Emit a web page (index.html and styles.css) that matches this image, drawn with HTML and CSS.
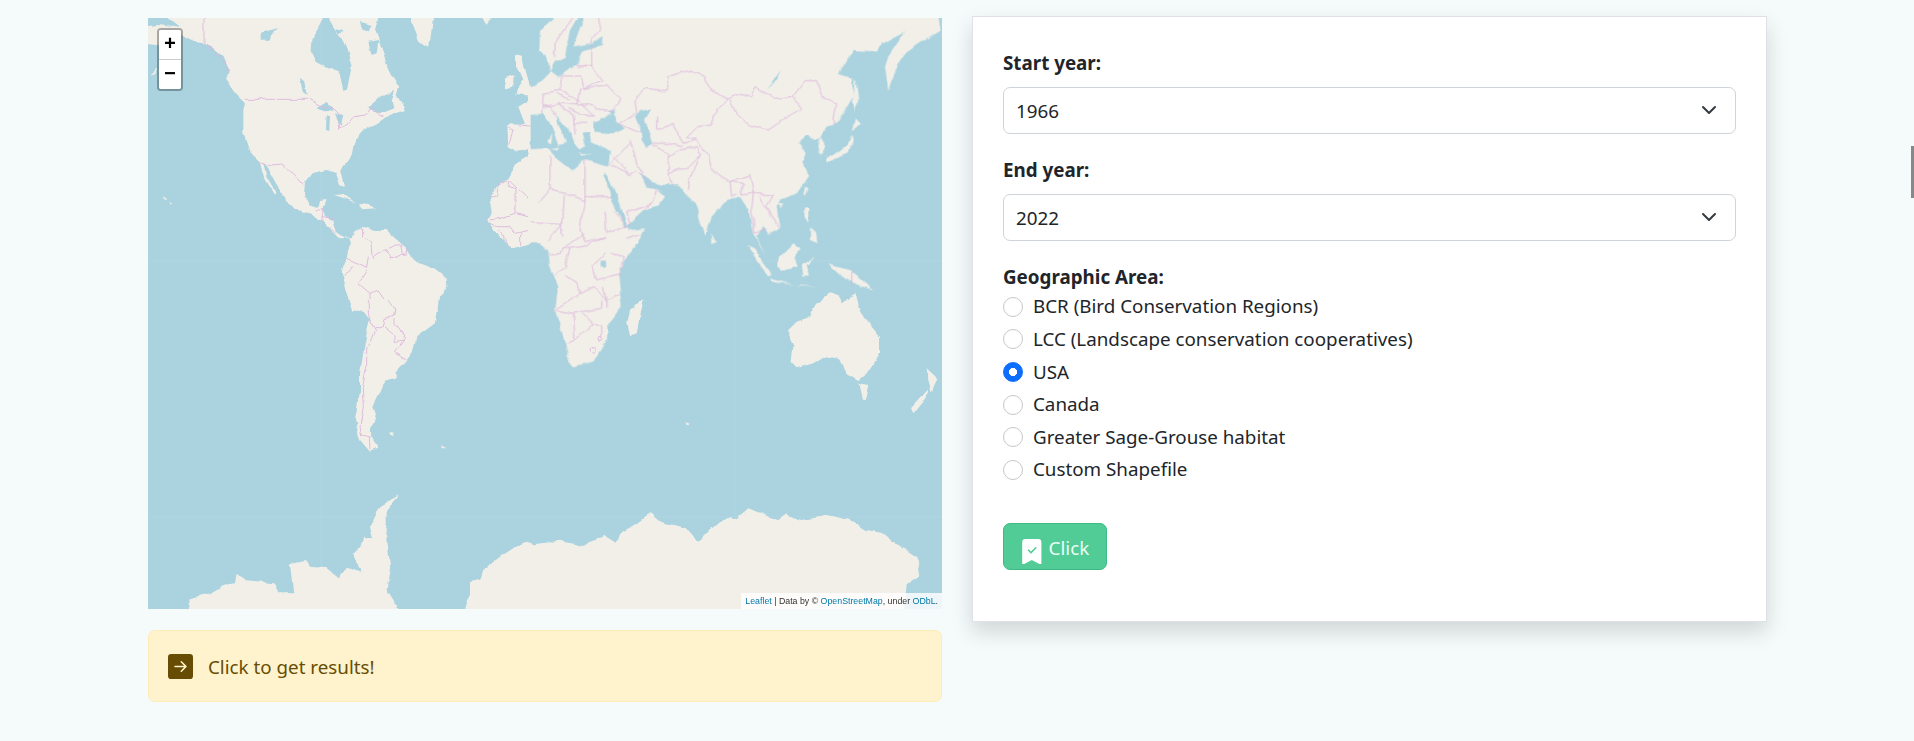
FILE: index.html
```html
<!DOCTYPE html>
<html lang="en">
<head>
    <meta charset="UTF-8">
    <meta name="viewport" content="width=device-width, initial-scale=1.0">
    <title>Trends</title>
    <link rel="stylesheet" href="styles.css">
</head>
<body>
    <div class="scroll-thumb"></div>
    <main class="page">
        <section class="left-col">
            <div class="map">
                <svg class="tiles" viewBox="148 18 794 591" width="794" height="591" aria-hidden="true">
                    <defs>
                        <filter id="rough" filterUnits="userSpaceOnUse" x="100" y="0" width="900" height="650">
                            <feTurbulence type="fractalNoise" baseFrequency=".07" numOctaves="3" seed="4"/>
                            <feDisplacementMap in="SourceGraphic" scale="5" xChannelSelector="R" yChannelSelector="G"/>
                        </filter>
                    </defs>
                    <g class="rough">
                    <!-- west part -->
                    <g transform="translate(130 0) scale(.33333)">
                        <path class="land" d="M85,30 L750,30 L735,90 L750,130 L770,190 L790,230 L808,262 L800,285 L825,330 L780,345 L745,370 L712,385 L690,400 L672,430 L665,470 L640,500 L630,510 L642,560 L630,555 L618,520 L590,510 L545,520 L525,545 L522,585 L535,615 L565,625 L570,600 L590,597 L580,625 L585,650 L610,660 L620,695 L640,710 L660,715 L672,695 L695,680 L735,690 L770,690 L790,710 L830,745 L855,785 L920,810 L950,835 L952,860 L930,890 L925,935 L670,935 L640,835 L635,815 L650,775 L660,730 L655,715 L630,715 L605,690 L580,665 L545,645 L510,635 L470,610 L465,590 L435,545 L410,498 L388,485 L360,460 L340,400 L340,330 L345,310 L315,280 L285,235 L300,215 L280,170 L245,140 L222,130 L190,125 L160,110 L150,85 L130,70 Z"/>
                        <path class="land" d="M30,80 L85,75 L157,85 L157,110 L80,135 L30,130 Z M60,225 L82,205 L75,220 Z M388,488 L400,490 L420,545 L440,580 L430,578 L405,535 Z M835,30 L915,30 L905,110 L890,140 L865,120 Z M1040,30 L1095,30 L1070,75 Z M1155,165 L1175,170 L1195,240 L1202,270 L1202,290 L1155,285 L1180,240 L1155,200 Z M1125,235 L1150,225 L1150,260 L1125,265 Z M612,585 L640,583 L682,612 L650,597 Z M690,612 L720,615 L740,625 L700,628 Z M95,590 L105,592 L112,600 L100,597 Z M118,606 L127,612 L122,618 Z"/>
                        <path class="land" d="M1202,298 L1165,320 L1185,372 L1140,370 L1132,378 L1135,440 L1160,458 L1202,445 Z M1202,465 L1160,490 L1135,535 L1100,560 L1078,595 L1085,640 L1075,660 L1090,690 L1120,720 L1145,745 L1202,730 Z"/>
                        <path class="water" d="M590,20 L565,85 L545,115 L542,150 L560,185 L595,205 L628,218 L640,270 L652,265 L665,195 L650,150 L640,125 L620,90 L600,60 Z M395,100 L440,85 L415,122 L395,122 Z M510,235 L522,240 L530,285 L518,275 Z M562,322 L590,305 L612,332 L580,330 Z M590,345 L600,350 L598,390 L588,388 Z M615,340 L640,345 L632,378 L622,360 Z M715,325 L760,285 L795,270 L785,300 L790,322 L745,340 L722,332 Z M715,125 L745,120 L740,160 L725,165 Z M620,85 L640,90 L635,100 L622,98 Z M690,65 L725,75 L715,95 L695,85 Z"/>
                        <path class="water" d="M400,490 L415,505 L440,580 L410,530 Z"/>
                        <path class="line" d="M222,30 L222,130 L250,150 L275,175 L298,215 M345,298 L540,298 L570,315 L610,325 L630,345 L625,385 L650,375 L670,350 L710,345 L725,325 L745,345 L760,350 M385,487 L425,498 L455,495 L490,520 L520,553 M560,630 L580,625 L575,665 M575,650 L610,655 M600,680 L620,700 M695,680 L695,710 L725,725 L730,775 L770,745 L780,770 L830,765 L835,740 M780,745 L800,735 L815,735 L820,765 M650,775 L680,790 L710,805 L715,770 M640,825 L670,800 M710,810 L685,850 L720,880 L720,935 M720,880 L745,870 L790,935"/>
                        <path class="line" d="M1080,595 L1100,590 L1105,555 L1135,540 L1202,602 M1135,540 L1135,560 L1155,565 L1155,640 L1110,655 L1080,660 M1155,640 L1202,652 M1080,670 L1100,680 L1140,680 L1155,700 L1202,690 M1105,690 L1140,740 M1172,700 L1172,735 M1135,385 L1150,390 L1135,435 M1165,375 L1202,378"/>
                    </g>
                    <!-- east part -->
                    <g transform="translate(530 0) scale(.33333)">
                        <path class="land" d="M90,30 L1222,30 L1232,92 L1170,130 L1125,160 L1100,195 L1075,270 L1065,200 L1075,170 L1125,95 L1095,110 L1060,130 L1040,155 L970,150 L925,222 L965,235 L970,290 L920,370 L890,380 L865,415 L845,420 L810,430 L830,460 L820,485 L835,530 L800,580 L750,600 L740,620 L748,680 L715,705 L700,680 L690,700 L682,710 L710,770 L672,700 L660,640 L630,590 L590,600 L545,650 L527,712 L495,610 L470,590 L440,552 L385,555 L345,540 L325,515 L405,590 L385,620 L340,630 L292,674 L296,690 L345,685 L320,730 L280,785 L265,830 L275,920 L235,970 L235,1010 L190,1085 L130,1100 L120,1090 L100,1010 L75,930 L85,860 L60,800 L55,750 L30,730 L-5,730 L-5,445 L55,442 L72,470 L125,510 L165,480 L235,500 L240,450 L180,425 L175,395 L155,398 L165,440 L150,445 L130,420 L125,400 L80,345 L85,370 L108,430 L85,435 L60,370 L40,340 L-5,345 L-5,265 L35,240 L60,215 L50,170 L28,150 L30,95 Z"/>
                        <path class="land" d="M868,410 L885,440 L870,470 L862,440 Z M975,355 L995,372 L965,390 Z M965,400 L970,430 L950,460 L890,490 L888,475 L925,455 L955,430 Z M975,232 L985,300 L975,335 L968,300 Z M825,560 L832,565 L825,590 L820,585 Z M822,625 L835,625 L835,665 L820,650 Z M840,680 L862,700 L865,730 L840,720 Z M745,610 L760,610 L752,625 Z M545,700 L557,725 L547,733 Z M650,735 L672,745 L725,822 L715,830 Z M720,835 L790,855 L860,860 L820,860 L725,845 Z M745,775 L790,730 L815,745 L790,775 L800,800 L760,812 L745,800 Z M815,790 L855,770 L830,795 L840,830 L820,830 Z M895,790 L960,808 L1030,870 L985,855 L940,832 Z M65,400 L60,430 L52,425 Z M90,440 L60,445 L85,448 Z M150,458 L185,462 L155,464 Z"/>
                        <path class="water" d="M118,95 L155,30 L170,30 L140,110 L130,140 L190,128 L218,112 L215,135 L160,150 L150,175 L145,195 L110,210 L85,230 L60,212 L75,185 L105,170 L112,130 Z M190,365 L250,340 L265,370 L285,385 L250,400 L190,395 Z M235,335 L262,325 L250,345 Z M330,330 L360,325 L345,360 L370,430 L350,445 L335,420 L330,380 L318,350 Z M218,518 L230,525 L262,590 L295,685 L285,678 L250,610 Z M328,515 L345,530 L385,555 L375,570 L350,565 L335,535 Z M750,208 L745,240 L710,268 L735,240 Z M212,785 L228,785 L228,803 L212,803 Z M805,430 L835,405 L850,418 L825,430 Z"/>
                        <path class="line" d="M200,30 L212,85 L190,115 L185,130 L185,200 L160,200 M140,30 L75,130 L75,170 M140,200 L185,200 L215,240 L160,265 L155,225 L95,225 M95,225 L90,270 L150,305 M155,265 L230,255 L270,295 L245,335 L200,330 M150,265 L140,315 L190,310 L200,330 M95,270 L40,280 L35,340 M35,320 L95,310 L140,315 M80,280 L120,300 M40,322 L60,320 L80,345 M115,325 L150,345 L190,345 M130,370 L175,370 M130,345 L135,400 M85,305 L100,330 L130,345 M155,310 L190,345"/>
                        <path class="line" d="M265,370 L310,390 L335,400 M270,370 L320,340 L315,300 L345,265 L408,272 L415,230 L475,212 L520,228 L545,272 L595,297 M595,297 L630,280 L665,290 L675,262 L735,295 L790,290 L825,245 L860,245 L875,290 L920,310 L910,375 M790,290 L815,325 L765,355 L715,390 L655,375 L620,345 L600,300 M380,350 L380,390 L430,370 L460,430 M460,430 L500,420 L470,410 L500,380 L545,375 L560,325 L595,297 M370,430 L410,430 L460,440 M500,425 L535,465 L545,510 L600,545 L660,525 L670,580 L635,585 L640,550 L600,545 L605,590 L625,580 M300,420 L320,490 L340,520 M370,435 L415,465 L415,520 L428,555 M415,470 L455,450 L500,440 L510,465 L480,540 L475,570 M415,520 L470,505 L510,465 M670,580 L665,630 L675,700 L710,690 M670,580 L730,585 L710,620 L745,680 M690,590 L720,650 M240,490 L300,430 M250,470 L300,525 L320,510 M325,515 L345,540 L380,570 L365,610 L290,635 L300,670 M340,630 L365,610 M240,495 L300,525 M965,805 L965,860"/>
                        <path class="line" d="M60,470 L60,570 L25,610 M60,570 L100,580 L165,605 L165,480 M165,590 L245,590 M165,605 L160,620 L150,690 L165,725 L225,710 M100,585 L95,670 L55,720 M0,665 L90,670 L95,710 M160,700 L100,745 L120,745 L160,740 L225,710 M100,745 L95,760 L60,765 M225,635 L230,700 L300,675 M250,630 L290,675 M290,715 L330,700 M240,760 L280,770 L265,830 M228,760 L190,800 L200,840 L265,825 M120,745 L105,800 L75,825 M105,830 L140,850 L150,880 L80,925 M150,880 L190,860 L230,900 L270,880 M220,860 L235,925 M75,930 L130,940 L155,935 L215,925 L215,900 M130,940 L135,1020 M155,935 L190,975 L135,1020 M190,975 L215,975 L215,1015 M110,1030 L135,1020"/>
                    </g>
                    <!-- south west part -->
                    <g transform="translate(130 300) scale(.33333)">
                        <path class="land" d="M670,-5 L925,-5 L915,70 L860,110 L850,150 L820,190 L800,210 L800,235 L765,245 L750,280 L730,320 L740,350 L720,385 L720,410 L745,445 L720,455 L690,420 L675,360 L690,270 L690,220 L710,100 L720,60 Z"/>
                        <path class="land" d="M775,402 L795,397 L790,408 Z M935,433 L948,445 L940,445 Z M165,960 L180,895 L240,880 L280,855 L315,850 L320,825 L345,840 L430,850 L445,880 L490,880 L480,790 L525,780 L540,800 L590,805 L630,835 L650,800 L695,815 L680,790 L670,765 L690,745 L700,710 L730,715 L720,680 L750,620 L810,585 L770,630 L770,700 L780,800 L770,870 L825,960 Z M995,960 L1020,880 L1020,845 L1050,840 L1060,810 L1110,770 L1150,745 L1190,725 L1205,730 L1205,960 Z"/>
                        <path class="line" d="M715,0 L715,40 L720,60 L735,85 L710,150 L710,200 L697,260 L700,320 L690,380 L695,405 L718,410 L720,450 M735,80 L760,80 L765,55 L790,50 L795,30 L775,0 M765,80 L795,105 L795,125 L820,120 L825,115 L815,95 L795,70 L795,55 M825,115 L795,155 L800,160 L825,180"/>
                    </g>
                    <!-- south east part -->
                    <g transform="translate(530 300) scale(.33333)">
                        <path class="land" d="M-5,735 L90,722 L160,738 L220,705 L260,730 L270,700 L320,670 L360,640 L390,665 L470,685 L505,725 L540,690 L585,650 L620,655 L655,625 L740,660 L770,640 L810,660 L880,650 L890,645 L960,660 L1010,690 L1060,700 L1110,740 L1170,780 L1160,830 L1130,850 L1120,960 L-5,960 Z"/>
                        <path class="land" d="M775,90 L800,65 L840,50 L860,10 L900,-20 L925,-10 L935,10 L965,-10 L975,-20 L1000,50 L1050,110 L1050,160 L1010,220 L985,240 L950,220 L930,180 L880,170 L850,190 L800,205 L785,190 L790,140 L775,110 Z M985,250 L1015,255 L1005,300 L995,295 Z M1190,205 L1222,235 L1205,275 L1195,240 Z M1195,265 L1140,325 L1150,340 L1190,290 Z M330,0 L340,0 L320,100 L300,108 L292,70 L300,30 Z M466,364 L480,368 L472,376 Z"/>
                        <circle class="line" cx="188" cy="148" r="8"/>
                        <circle class="line" cx="210" cy="118" r="6"/>
                    </g>
                    </g>
                    <path class="seam" d="M148,261 H943 M148,517 H943 M321,18 V609 M735,18 V609"/>
                </svg>
                <div class="zoom-box">
                    <a class="zoom-btn">+</a>
                    <a class="zoom-btn">&#8722;</a>
                </div>
                <div class="attribution"><a>Leaflet</a> | Data by &copy; <a>OpenStreetMap</a>, under <a>ODbL</a>.</div>
            </div>
            <div class="alert">
                <svg class="alert-icon" viewBox="0 0 16 16" aria-hidden="true"><path d="M0 14a2 2 0 0 0 2 2h12a2 2 0 0 0 2-2V2a2 2 0 0 0-2-2H2a2 2 0 0 0-2 2v12zm4.5-6.5h5.793L8.146 5.354a.5.5 0 1 1 .708-.708l3 3a.5.5 0 0 1 0 .708l-3 3a.5.5 0 0 1-.708-.708L10.293 8.5H4.5a.5.5 0 0 1 0-1z"/></svg>
                <span class="alert-text">Click to get results!</span>
            </div>
        </section>

        <form class="card">
            <label class="field-label" for="startYear">Start year:</label>
            <select class="form-select" id="startYear">
                <option>1966</option>
            </select>

            <label class="field-label" for="endYear">End year:</label>
            <select class="form-select" id="endYear">
                <option>2022</option>
            </select>

            <div class="field-label radio-title">Geographic Area:</div>
            <label class="radio-row"><input type="radio" name="area"><span>BCR (Bird Conservation Regions)</span></label>
            <label class="radio-row"><input type="radio" name="area"><span>LCC (Landscape conservation cooperatives)</span></label>
            <label class="radio-row"><input type="radio" name="area" checked><span>USA</span></label>
            <label class="radio-row"><input type="radio" name="area"><span>Canada</span></label>
            <label class="radio-row"><input type="radio" name="area"><span>Greater Sage-Grouse habitat</span></label>
            <label class="radio-row"><input type="radio" name="area"><span>Custom Shapefile</span></label>

            <button type="button" class="btn-click">
                <svg class="btn-icon" viewBox="0 0 16 16" aria-hidden="true"><path fill-rule="evenodd" d="M2 15.5V2a2 2 0 0 1 2-2h8a2 2 0 0 1 2 2v13.5a.5.5 0 0 1-.74.439L8 13.069l-5.26 2.87A.5.5 0 0 1 2 15.5zm8.854-9.646a.5.5 0 0 0-.708-.708L7.5 7.793 6.354 6.646a.5.5 0 1 0-.708.708l1.5 1.5a.5.5 0 0 0 .708 0l3-3z"/></svg>
                <span class="btn-text">Click</span>
            </button>
        </form>
    </main>
</body>
</html>
```
FILE: styles.css
```css
* {
    box-sizing: border-box;
}
html, body {
    margin: 0;
    height: 100%;
    overflow: hidden;
}
body {
    font-family: 'Noto Sans', sans-serif;
    font-size: 18.8px;
    line-height: 28.8px;
    color: #212529;
    background-color: #f5fbfb;
}
.page {
    display: grid;
    grid-template-columns: 794px 795px;
    column-gap: 30px;
    align-items: start;
    padding: 16px 0 0 148px;
}
.left-col {
    padding-top: 2px;
}

/* map */
.map {
    position: relative;
    width: 794px;
    height: 591px;
    overflow: hidden;
    background: #aad3df;
}
.tiles {
    display: block;
    filter: blur(.35px);
}
.rough {
    filter: url(#rough);
}
.land {
    fill: #f2efe9;
}
.water {
    fill: #aad3df;
}
.line {
    fill: none;
    stroke: #dcb6dc;
    stroke-width: 2.7;
    stroke-linejoin: round;
}
.seam {
    fill: none;
    stroke: #fff;
    stroke-opacity: .07;
    stroke-width: 1;
}
.zoom-box {
    position: absolute;
    top: 10px;
    left: 9px;
    width: 26px;
    border: 2px solid rgba(0, 0, 0, .3);
    border-radius: 4px;
    background-clip: padding-box;
}
.zoom-btn {
    display: block;
    height: 29px;
    background: #fff;
    color: #000;
    font: bold 20px/29px 'Liberation Mono', monospace;
    text-align: center;
}
.zoom-btn:first-child {
    border-bottom: 1px solid #ccc;
    border-radius: 2px 2px 0 0;
    height: 30px;
}
.zoom-btn:last-child {
    border-radius: 0 0 2px 2px;
}
.attribution {
    position: absolute;
    right: 0;
    bottom: 0;
    padding: 0 4px;
    background: rgba(255, 255, 255, .8);
    color: #333;
    font: 8.8px/16px 'Liberation Sans', sans-serif;
}
.attribution a {
    color: #0078a8;
}

/* notice under the map */
.alert {
    display: flex;
    align-items: center;
    gap: 15px;
    height: 72px;
    margin-top: 21px;
    padding: 0 19px;
    background: #fff3cd;
    border: 1px solid #ffecb5;
    border-radius: 7px;
    color: #664d03;
}
.alert-icon {
    width: 25px;
    height: 25px;
    fill: #664d03;
}
.alert-text {
    padding-top: 2px;
}

/* form card */
.card {
    height: 606px;
    padding: 32px 30px 0;
    background: #fff;
    border: 1px solid #dee2e6;
    box-shadow: 0 10px 20px rgba(0, 0, 0, .15);
}
.field-label {
    display: block;
    margin-bottom: 9px;
    font-weight: 700;
}
.form-select {
    display: block;
    width: 733px;
    height: 47px;
    margin-bottom: 22px;
    padding: 2px 12px 0;
    appearance: none;
    background: #fff url("data:image/svg+xml,%3csvg xmlns='http://www.w3.org/2000/svg' viewBox='0 0 16 16'%3e%3cpath fill='none' stroke='%23343a40' stroke-linecap='round' stroke-linejoin='round' stroke-width='2' d='m2 5 6 6 6-6'/%3e%3c/svg%3e") no-repeat right 18px center / 16px 16px;
    border: 1px solid #ced4da;
    border-radius: 7px;
    color: #212529;
    font: inherit;
}
.radio-title {
    margin-bottom: 1px;
}
.radio-row {
    display: flex;
    align-items: center;
    gap: 10px;
    height: 28.8px;
    margin-bottom: 3.8px;
}
.radio-row input {
    width: 20px;
    height: 20px;
    margin: 0;
    flex: none;
    appearance: none;
    background: #fff;
    border: 1px solid #c4c8cc;
    border-radius: 50%;
}
.radio-row input:checked {
    border-color: #0d6efd;
    background: radial-gradient(circle, #fff 0 30%, #0d6efd 34%);
}
.btn-click {
    display: flex;
    align-items: center;
    gap: 4px;
    width: 104px;
    height: 47px;
    margin-top: 39px;
    padding: 0 15px;
    background: #51cc97;
    border: 1px solid #3dba87;
    border-radius: 7px;
    color: #eafff5;
    font: inherit;
}
.btn-icon {
    width: 25.6px;
    height: 25.6px;
    flex: none;
    align-self: flex-end;
    margin-bottom: 5px;
    fill: #fff;
}
.btn-text {
    padding-top: 3px;
}

/* thin scrollbar thumb at the window edge */
.scroll-thumb {
    position: fixed;
    top: 146px;
    right: 0;
    width: 3px;
    height: 52px;
    background: #888;
}
```
